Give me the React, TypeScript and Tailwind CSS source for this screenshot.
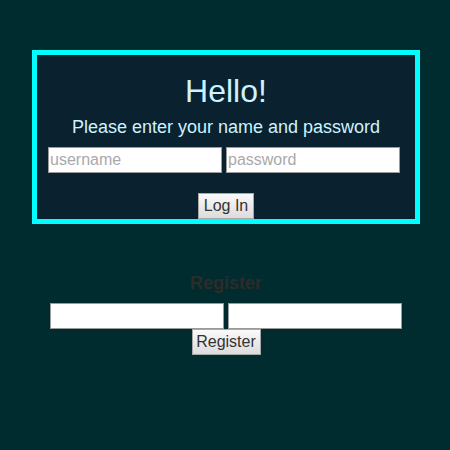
const font = { fontFamily: '"Liberation Sans", Arial, sans-serif' };

const Field = ({ placeholder }: { placeholder?: string }) => (
  <input
    placeholder={placeholder}
    className="w-[174px] h-[26px] bg-white border border-[#9a9a9a] px-[1px] text-[16px] text-[#333] placeholder:text-[#a9a9a9] outline-none"
  />
);

const Button = ({ label, w }: { label: string; w: string }) => (
  <button
    className={`${w} h-[26px] border border-[#a8a8a8] bg-gradient-to-b from-[#fafafa] to-[#dcdcdc] text-[16px] text-[#333] leading-none`}
  >
    {label}
  </button>
);

export default function App() {
  return (
    <div className="w-[450px] h-[450px] bg-[#012c2f] pt-[50px]" style={font}>
      <div className="ml-[32px] w-[388px] h-[174px] border-[5px] border-[#00ffff] bg-[#0a2130] flex flex-col items-center pt-[18px]">
        <h1 className="h-[36px] text-[32px] leading-[36px] text-[#cdf3ff]">Hello!</h1>
        <p className="mt-[7px] h-[22px] text-[18px] leading-[22px] text-[#cdf3ff]">
          Please enter your name and password
        </p>
        <div className="mt-[9px] w-full flex gap-[4px] pl-[11px] pr-[15px]">
          <Field placeholder="username" />
          <Field placeholder="password" />
        </div>
        <div className="mt-[20px]">
          <Button label="Log In" w="w-[56px]" />
        </div>
      </div>

      <div className="mt-[49px] flex flex-col items-center pl-[2px]">
        <h2 className="h-[20px] text-[18px] leading-[20px] font-bold text-[#2e2b2b]">Register</h2>
        <div className="mt-[10px] flex gap-[4px]">
          <Field />
          <Field />
        </div>
        <Button label="Register" w="w-[69px]" />
      </div>
    </div>
  );
}
